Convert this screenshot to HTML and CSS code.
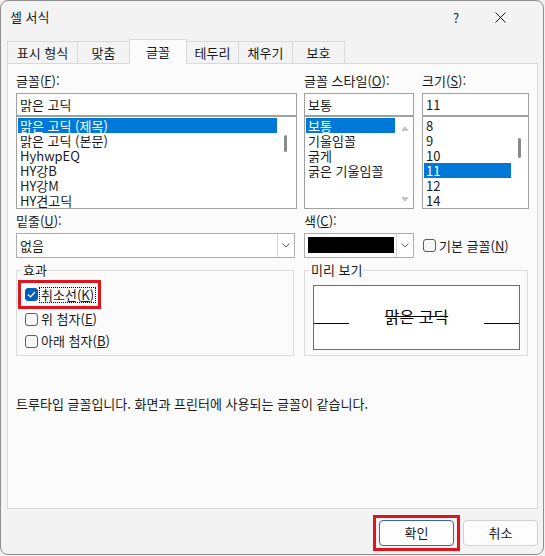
FILE: index.html
```html
<!DOCTYPE html>
<html lang="ko">
<head>
<meta charset="utf-8">
<title>셀 서식</title>
<link rel="stylesheet" href="styles.css">
</head>
<body>
<div class="window">
  <div class="titlebar">
    <span class="title">셀 서식</span>
    <span class="cap help">?</span>
    <span class="cap close"><svg width="11" height="11" viewBox="0 0 11 11"><path d="M0.5 0.5L10.5 10.5M10.5 0.5L0.5 10.5" stroke="#1a1a1a" stroke-width="1" fill="none"/></svg></span>
  </div>
  <div class="tabs">
    <div class="tab w1">표시 형식</div>
    <div class="tab w2">맞춤</div>
    <div class="tab w3 active">글꼴</div>
    <div class="tab w4">테두리</div>
    <div class="tab w5">채우기</div>
    <div class="tab w6">보호</div>
  </div>
  <div class="panel">
    <div class="row-a">
      <div class="col col-font">
        <div class="lbl">글꼴(<u>F</u>):</div>
        <div class="field">맑은 고딕</div>
        <div class="list">
          <div class="items">
            <div class="item sel">맑은 고딕 (제목)</div>
            <div class="item">맑은 고딕 (본문)</div>
            <div class="item">HyhwpEQ</div>
            <div class="item">HY강B</div>
            <div class="item">HY강M</div>
            <div class="item">HY견고딕</div>
          </div>
          <div class="sb sb-font"><div class="thumb thumb-font"></div></div>
        </div>
      </div>
      <div class="col col-style">
        <div class="lbl">글꼴 스타일(<u>O</u>):</div>
        <div class="field">보통</div>
        <div class="list">
          <div class="items">
            <div class="item sel">보통</div>
            <div class="item">기울임꼴</div>
            <div class="item">굵게</div>
            <div class="item">굵은 기울임꼴</div>
          </div>
          <div class="sb sb-style">
            <span class="arrow up"></span>
            <span class="arrow down"></span>
          </div>
        </div>
      </div>
      <div class="col col-size">
        <div class="lbl">크기(<u>S</u>):</div>
        <div class="field">11</div>
        <div class="list">
          <div class="items">
            <div class="item">8</div>
            <div class="item">9</div>
            <div class="item">10</div>
            <div class="item sel">11</div>
            <div class="item">12</div>
            <div class="item">14</div>
          </div>
          <div class="sb sb-size"><div class="thumb thumb-size"></div></div>
        </div>
      </div>
    </div>

    <div class="row-b">
      <div class="col col-font">
        <div class="lbl">밑줄(<u>U</u>):</div>
        <div class="combo combo-under">
          <div class="val">없음</div>
          <div class="dd"><svg width="8" height="5" viewBox="0 0 8 5"><path d="M0.5 0.5L4 4L7.5 0.5" stroke="#606060" stroke-width="1" fill="none"/></svg></div>
        </div>
      </div>
      <div class="col col-style">
        <div class="lbl">색(<u>C</u>):</div>
        <div class="combo combo-color">
          <div class="val"><div class="swatch"></div></div>
          <div class="dd"><svg width="8" height="5" viewBox="0 0 8 5"><path d="M0.5 0.5L4 4L7.5 0.5" stroke="#606060" stroke-width="1" fill="none"/></svg></div>
        </div>
      </div>
      <div class="col col-size">
        <div class="lbl"></div>
        <div class="check-line">
          <span class="box"></span>
          <span class="ctext">기본 글꼴(<u>N</u>)</span>
        </div>
      </div>
    </div>

    <div class="row-c">
      <div class="group group-effects">
        <span class="legend">효과</span>
        <div class="highlight">
          <span class="box checked"><svg width="9" height="7" viewBox="0 0 9 7"><path d="M1 3.5L3.5 6L8 1" stroke="#fff" stroke-width="1.2" fill="none"/></svg></span>
          <span class="ctext focus">취소선(<u>K</u>)</span>
        </div>
        <div class="check-row">
          <span class="box"></span>
          <span class="ctext">위 첨자(<u>E</u>)</span>
        </div>
        <div class="check-row">
          <span class="box"></span>
          <span class="ctext">아래 첨자(<u>B</u>)</span>
        </div>
      </div>
      <div class="group group-preview">
        <span class="legend">미리 보기</span>
        <div class="preview">
          <span class="pline"></span>
          <span class="ptext">맑은 고딕</span>
          <span class="pline"></span>
        </div>
      </div>
    </div>

    <div class="info">트루타입 글꼴입니다. 화면과 프린터에 사용되는 글꼴이 같습니다.</div>
  </div>
  <div class="buttons">
    <div class="redwrap"><div class="btn default">확인</div></div>
    <div class="btn">취소</div>
  </div>
</div>
</body>
</html>
```

FILE: styles.css
```css
html, body {
  margin: 0;
  background: #f0f0f0;
}
body {
  font-family: "Noto Sans CJK KR", "Noto Sans", sans-serif;
  font-size: 13px;
  color: #1a1a1a;
}
u { text-decoration: underline; text-underline-offset: 1px; }

.window {
  width: 544px;
  height: 555px;
  box-sizing: border-box;
  border: 1px solid #8e8e8e;
  border-radius: 8px;
  background: #f3f3f3;
  display: flex;
  flex-direction: column;
  overflow: hidden;
}

.titlebar {
  height: 32px;
  display: flex;
  align-items: center;
  padding-left: 9px;
  padding-right: 21px;
}
.title { flex: 1; line-height: 14px; }
.cap {
  width: 44px;
  height: 32px;
  display: flex;
  align-items: center;
  justify-content: center;
}
.help { font-size: 13px; }

.tabs {
  display: flex;
  align-items: flex-end;
  height: 24px;
  margin-top: 6px;
  padding-left: 6px;
}
.tab {
  height: 22px;
  box-sizing: border-box;
  border: 1px solid #d9d9d9;
  border-bottom: none;
  display: flex;
  align-items: center;
  justify-content: center;
  margin-left: -1px;
  background: #f3f3f3;
  line-height: 14px;
}
.tab:first-child { margin-left: 0; }
.tab.active {
  height: 25px;
  margin-bottom: -1px;
  background: #fbfbfb;
  position: relative;
  z-index: 1;
}
.w1 { width: 71px; }
.w2 { width: 53px; }
.w3 { width: 58px; }
.w4 { width: 53px; }
.w5 { width: 55px; }
.w6 { width: 53px; }

.panel {
  margin: 0 5px 0 6px;
  height: 446px;
  box-sizing: border-box;
  border: 1px solid #d9d9d9;
  background: #fbfbfb;
  padding: 10px 0 0 8px;
}

.row-a, .row-b { display: flex; }
.row-b { margin-top: 5px; }
.col { display: flex; flex-direction: column; }
.col-font { width: 281px; margin-right: 7px; }
.col-style { width: 110px; margin-right: 8px; }
.col-size { width: 107px; }

.lbl {
  height: 14px;
  line-height: 14px;
  margin-bottom: 5px;
  white-space: nowrap;
}
.field {
  height: 23px;
  box-sizing: border-box;
  border: 1px solid #a0a0a0;
  background: #fff;
  padding-left: 3px;
  line-height: 21px;
}
.list {
  height: 93px;
  box-sizing: border-box;
  border: 1px solid #a0a0a0;
  background: #fff;
  display: flex;
}
.items {
  flex: 1;
  padding: 1px 1px 0 1px;
  overflow: hidden;
}
.item {
  height: 15px;
  line-height: 15px;
  padding-left: 2px;
  white-space: nowrap;
}
.item.sel { background: #0078d7; color: #fff; }

.sb { display: flex; flex-direction: column; }
.sb-font { width: 18px; }
.sb-style { width: 17px; align-items: center; justify-content: space-between; padding: 9px 0 6px; box-sizing: border-box; }
.sb-size { width: 16px; }
.thumb {
  width: 3px;
  background: #8a8a8a;
  border-radius: 2px;
  margin-left: 6px;
}
.thumb-font { height: 17px; margin-top: 18px; }
.thumb-size { height: 20px; margin-top: 21px; }
.arrow {
  width: 0;
  height: 0;
  border-left: 4px solid transparent;
  border-right: 4px solid transparent;
}
.arrow.up { border-bottom: 5px solid #c4c4c4; }
.arrow.down { border-top: 5px solid #c4c4c4; }

.combo {
  height: 25px;
  box-sizing: border-box;
  border: 1px solid #adadad;
  background: #fff;
  display: flex;
}
.combo-under { width: 279px; }
.combo .val {
  flex: 1;
  padding-left: 3px;
  line-height: 23px;
}
.combo .dd {
  width: 17px;
  box-sizing: border-box;
  border-left: 1px solid #d6d6d6;
  display: flex;
  align-items: center;
  justify-content: center;
}
.swatch {
  width: 86px;
  height: 16px;
  background: #000;
  margin-top: 3px;
}

.check-line {
  height: 25px;
  display: flex;
  align-items: center;
  padding-left: 1px;
}
.box {
  width: 13px;
  height: 13px;
  box-sizing: border-box;
  border: 1px solid #5c5c5c;
  border-radius: 3px;
  background: #f7f7f7;
  flex: none;
  display: flex;
  align-items: center;
  justify-content: center;
}
.box.checked {
  background: #005fb8;
  border-color: #005fb8;
}
.ctext {
  margin-left: 3px;
  line-height: 14px;
  white-space: nowrap;
}
.ctext.focus {
  outline: 1px dotted #000;
  outline-offset: 0;
  padding: 0 1px;
  margin-left: 2px;
}

.row-c {
  display: flex;
  margin-top: 12px;
}
.group {
  position: relative;
  border: 1px solid #dcdcdc;
  height: 86px;
  box-sizing: border-box;
}
.group-effects { width: 278px; margin-right: 10px; }
.group-preview { width: 224px; }
.legend {
  position: absolute;
  top: -8px;
  left: 5px;
  padding: 0 1px;
  background: #fbfbfb;
  line-height: 14px;
}
.highlight {
  margin: 9px 0 0 1px;
  width: 83px;
  height: 29px;
  box-sizing: border-box;
  border: 3px solid #e0141e;
  display: flex;
  align-items: center;
  padding-left: 4px;
}
.check-row {
  display: flex;
  align-items: center;
  height: 22px;
  padding-left: 8px;
}
.highlight + .check-row { margin-top: -1px; }

.preview {
  margin: 14px 0 0 8px;
  width: 207px;
  height: 65px;
  box-sizing: border-box;
  border: 1px solid #6d6d6d;
  background: #fff;
  display: flex;
  align-items: flex-start;
}
.pline {
  width: 35px;
  height: 1px;
  background: #000;
  margin-top: 37px;
  flex: none;
}
.ptext {
  margin: 22px auto 0;
  line-height: 16px;
  font-size: 16px;
  text-decoration: line-through;
  text-decoration-thickness: 1px;
  color: #000;
}

.info {
  margin-top: 41px;
  line-height: 14px;
  white-space: nowrap;
}

.buttons {
  display: flex;
  justify-content: flex-end;
  align-items: center;
  padding: 6px 5px 0 0;
  gap: 3px;
  height: 36px;
}
.redwrap {
  border: 3px solid #e0141e;
  padding: 2px 3px;
  display: flex;
}
.btn {
  width: 75px;
  height: 26px;
  box-sizing: border-box;
  border: 1px solid #d0d0d0;
  border-radius: 4px;
  background: #fdfdfd;
  text-align: center;
  line-height: 24px;
}
.btn.default { border-color: #3d6a8a; }
```
